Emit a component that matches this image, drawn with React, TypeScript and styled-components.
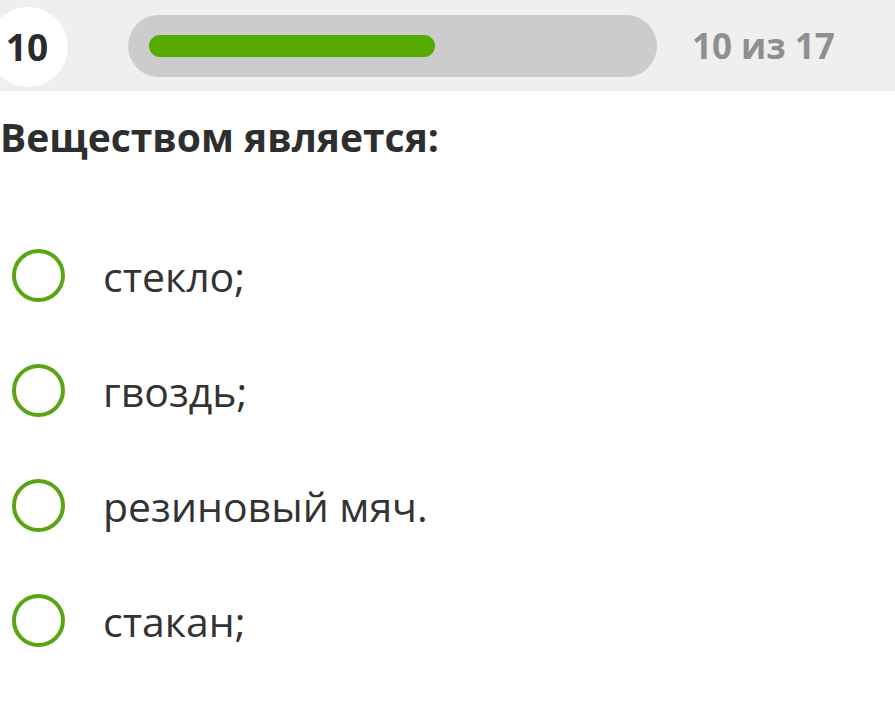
import styled, { createGlobalStyle } from "styled-components";

const GlobalStyle = createGlobalStyle`
  html, body {
    margin: 0;
    padding: 0;
    background: #ffffff;
    overflow: hidden;
  }
  body {
    font-family: "Open Sans", "Liberation Sans", sans-serif;
    color: #333333;
  }
`;

const options = ["стекло;", "гвоздь;", "резиновый мяч.", "стакан;"];

export default function App() {
  return (
    <>
      <GlobalStyle />
      <Page>
        <Header>
          <NumberBadge>10</NumberBadge>
          <Track>
            <Fill style={{ width: `${(10 / 17) * 100}%` }} />
          </Track>
          <Counter>10 из 17</Counter>
        </Header>
        <Question>Веществом является:</Question>
        <Options>
          {options.map((o) => (
            <Option key={o}>
              <Radio />
              <OptionText>{o}</OptionText>
            </Option>
          ))}
        </Options>
      </Page>
    </>
  );
}

const Page = styled.div`
  width: 895px;
  height: 703px;
  overflow: hidden;
`;

const Header = styled.div`
  height: 91px;
  background: #efefef;
  display: flex;
  align-items: center;
`;

const NumberBadge = styled.div`
  width: 80px;
  height: 80px;
  margin-left: -12px;
  margin-top: 2px;
  flex-shrink: 0;
  border-radius: 50%;
  background: #ffffff;
  display: flex;
  align-items: center;
  justify-content: center;
  padding-right: 2px;
  box-sizing: border-box;
  font-size: 37px;
  font-weight: 700;
  color: #2b2b2b;
`;

const Track = styled.div`
  margin-left: 60px;
  width: 529px;
  height: 62px;
  border-radius: 31px;
  background: #cccccc;
  padding: 0 21px;
  box-sizing: border-box;
  display: flex;
  align-items: center;
`;

const Fill = styled.div`
  height: 22px;
  border-radius: 11px;
  background: #55aa00;
`;

const Counter = styled.div`
  margin-left: 35px;
  font-size: 35px;
  font-weight: 700;
  color: #8f8f8f;
`;

const Question = styled.h1`
  margin: 0;
  padding-top: 19px;
  font-size: 39px;
  line-height: 54px;
  font-weight: 700;
  color: #2e2e2e;
`;

const Options = styled.div`
  display: flex;
  flex-direction: column;
  gap: 62px;
  margin-top: 85px;
  padding-left: 12px;
`;

const Option = styled.div`
  display: flex;
  align-items: center;
  height: 53px;
`;

const Radio = styled.div`
  width: 53px;
  height: 53px;
  box-sizing: border-box;
  border-radius: 50%;
  border: 4.5px solid #5aa514;
  flex-shrink: 0;
`;

const OptionText = styled.div`
  margin-left: 38px;
  font-size: 41px;
  color: #333333;
`;
